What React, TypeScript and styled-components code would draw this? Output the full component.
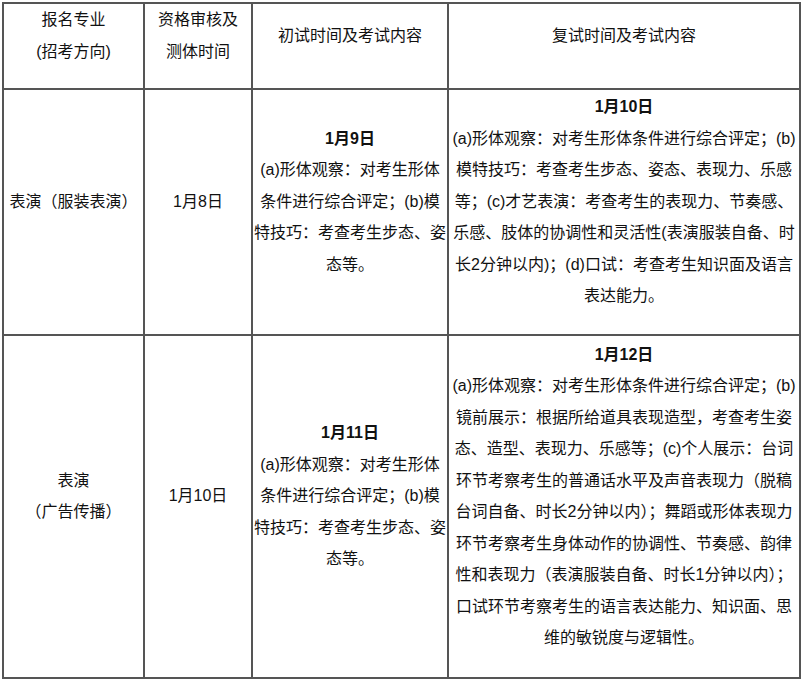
import React from "react";
import styled, { createGlobalStyle } from "styled-components";

const GlobalStyle = createGlobalStyle`
  html, body { margin: 0; padding: 0; background: #ffffff; }
  body {
    font-family: "Liberation Sans", "Noto Sans CJK SC", sans-serif;
    color: #111111;
  }
`;

const Page = styled.div`
  padding: 2px 0 0 2px;
`;

const Table = styled.table`
  border-collapse: collapse;
  table-layout: fixed;
  width: 799px;
  font-size: 16px;
  line-height: 31.5px;
`;

const HeadRow = styled.tr`
  height: 86px;
`;

const BodyRow = styled.tr<{ $h: number }>`
  height: ${(p) => p.$h}px;
`;

const Cell = styled.td`
  border: 2px solid #555555;
  padding: 0 1px 21px;
  text-align: center;
  vertical-align: middle;
  overflow: visible;
`;

const Line = styled.span<{ $bold?: boolean }>`
  display: block;
  white-space: nowrap;
  font-weight: ${(p) => (p.$bold ? 700 : 400)};
`;

type CellData = { date?: string; lines: string[] };

const Content = ({ date, lines }: CellData) => (
  <>
    {date && <Line $bold>{date}</Line>}
    {lines.map((l, i) => (
      <Line key={i}>{l}</Line>
    ))}
  </>
);

const firstLines = [
  "(a)形体观察：对考生形体",
  "条件进行综合评定；(b)模",
  "特技巧：考查考生步态、姿",
  "态等。",
];

const rows: { h: number; cells: CellData[] }[] = [
  {
    h: 246,
    cells: [
      { lines: ["表演（服装表演）"] },
      { lines: ["1月8日"] },
      { date: "1月9日", lines: firstLines },
      {
        date: "1月10日",
        lines: [
          "(a)形体观察：对考生形体条件进行综合评定；(b)",
          "模特技巧：考查考生步态、姿态、表现力、乐感",
          "等；(c)才艺表演：考查考生的表现力、节奏感、",
          "乐感、肢体的协调性和灵活性(表演服装自备、时",
          "长2分钟以内)；(d)口试：考查考生知识面及语言",
          "表达能力。",
        ],
      },
    ],
  },
  {
    h: 343,
    cells: [
      { lines: ["表演", "（广告传播）"] },
      { lines: ["1月10日"] },
      { date: "1月11日", lines: firstLines },
      {
        date: "1月12日",
        lines: [
          "(a)形体观察：对考生形体条件进行综合评定；(b)",
          "镜前展示：根据所给道具表现造型，考查考生姿",
          "态、造型、表现力、乐感等；(c)个人展示：台词",
          "环节考察考生的普通话水平及声音表现力（脱稿",
          "台词自备、时长2分钟以内）；舞蹈或形体表现力",
          "环节考察考生身体动作的协调性、节奏感、韵律",
          "性和表现力（表演服装自备、时长1分钟以内）；",
          "口试环节考察考生的语言表达能力、知识面、思",
          "维的敏锐度与逻辑性。",
        ],
      },
    ],
  },
];

export default function App() {
  return (
    <Page>
      <GlobalStyle />
      <Table>
        <colgroup>
          <col style={{ width: 141 }} />
          <col style={{ width: 108 }} />
          <col style={{ width: 196 }} />
          <col style={{ width: 352 }} />
        </colgroup>
        <tbody>
          <HeadRow>
            <Cell>
              <Content lines={["报名专业", "(招考方向)"]} />
            </Cell>
            <Cell>
              <Content lines={["资格审核及", "测体时间"]} />
            </Cell>
            <Cell>
              <Content lines={["初试时间及考试内容"]} />
            </Cell>
            <Cell>
              <Content lines={["复试时间及考试内容"]} />
            </Cell>
          </HeadRow>
          {rows.map((r, i) => (
            <BodyRow key={i} $h={r.h}>
              {r.cells.map((c, j) => (
                <Cell key={j}>
                  <Content {...c} />
                </Cell>
              ))}
            </BodyRow>
          ))}
        </tbody>
      </Table>
    </Page>
  );
}
